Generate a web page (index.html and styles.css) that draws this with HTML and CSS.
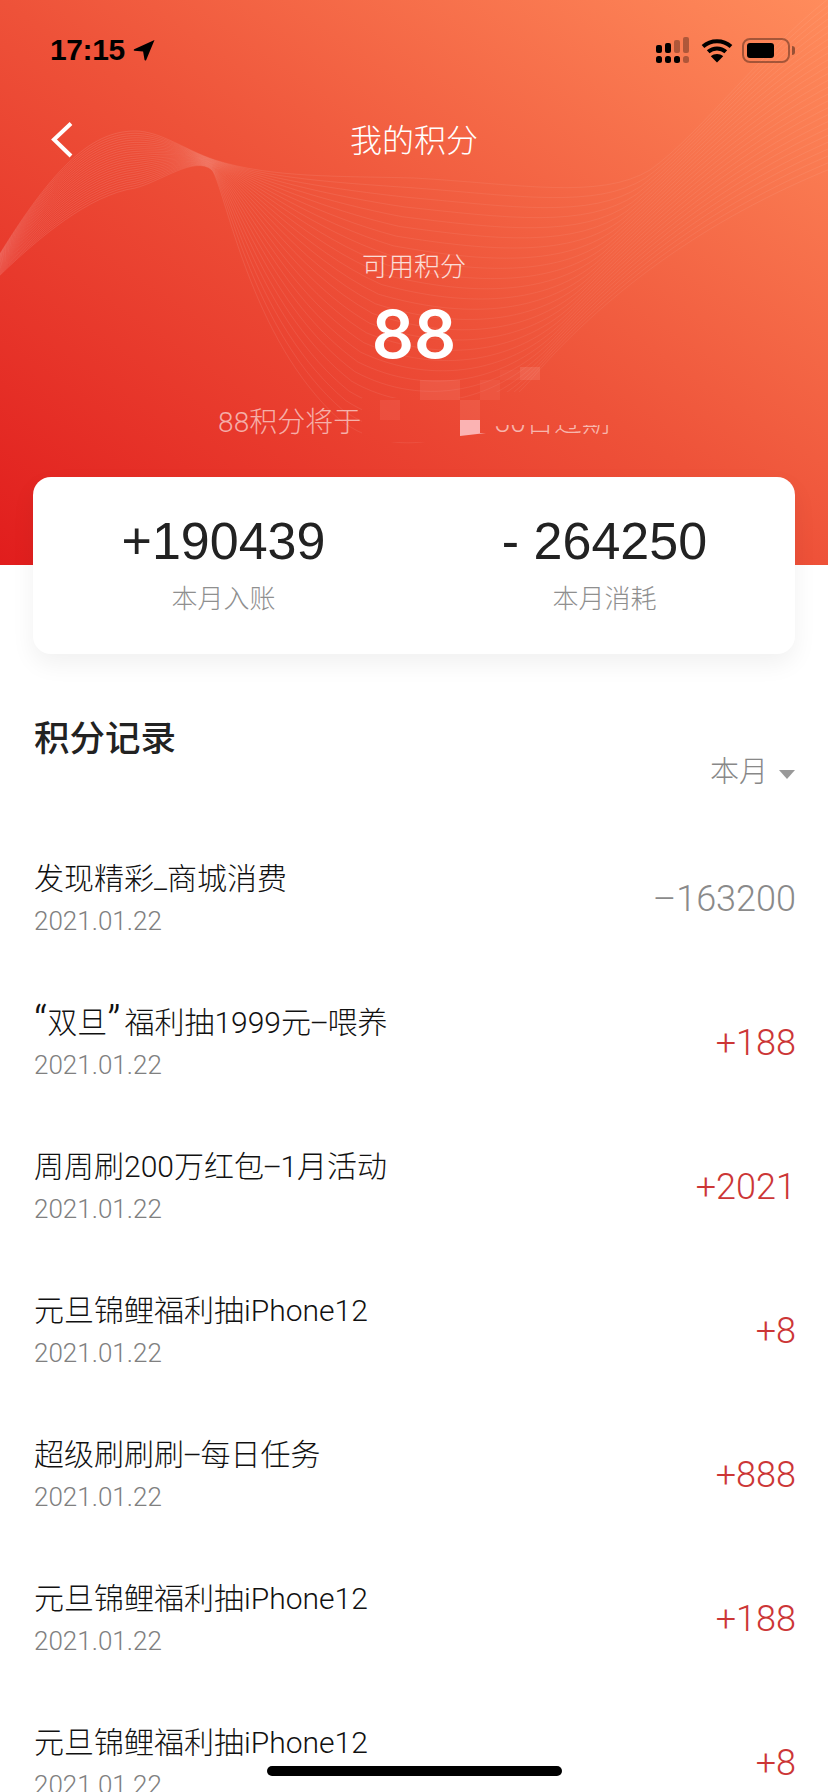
FILE: index.html
```html
<!DOCTYPE html>
<html lang="zh-CN">
<head>
  <meta charset="UTF-8" />
  <title>我的积分</title>
  <meta name="viewport" content="width=device-width, initial-scale=1">
  <link rel="stylesheet" href="styles.css">
</head>
<body>
  <div class="page">
    <header class="hero">
      <svg class="wave" id="wave" width="828" height="565" viewBox="0 0 828 565">
        <defs>
          <linearGradient id="waveFade" gradientUnits="userSpaceOnUse" x1="0" y1="0" x2="828" y2="0">
            <stop offset="0" stop-color="#fff" stop-opacity=".12"/>
            <stop offset=".25" stop-color="#fff" stop-opacity=".09"/>
            <stop offset=".6" stop-color="#fff" stop-opacity=".06"/>
            <stop offset="1" stop-color="#fff" stop-opacity=".07"/>
          </linearGradient>
        </defs>
      </svg>

      <div class="status">
        <div class="status-time">
          <span>17:15</span>
          <svg width="22" height="22" viewBox="0 0 22 22"><path d="M21.500 1 1.200 10.200c-.8.4-.6 1.500.3 1.600l8.600.6 1.400 8.400c.2.9 1.300 1 1.700.2z" fill="#000"/></svg>
        </div>
        <div class="status-icons">
          <svg width="34" height="26" viewBox="0 0 34 26">
            <rect x="0" y="8" width="6" height="8" rx="2" fill="#000"/>
            <rect x="9" y="6" width="6" height="10" rx="2" fill="#000"/>
            <rect x="18" y="3" width="6" height="13" rx="2" fill="#000" opacity=".3"/>
            <rect x="27" y="0" width="6" height="16" rx="2" fill="#000" opacity=".3"/>
            <rect x="0" y="19" width="6" height="7" rx="2.500" fill="#000"/>
            <rect x="9" y="19" width="6" height="7" rx="2.500" fill="#000"/>
            <rect x="18" y="19" width="6" height="7" rx="2.500" fill="#000"/>
            <rect x="27" y="19" width="6" height="7" rx="2.500" fill="#000" opacity=".3"/>
          </svg>
          <svg class="wifi" width="32" height="25" viewBox="0 0 32 25">
            <path d="M2 8.500C9.800 1.500 22.200 1.500 30 8.500M7.200 13.800C12.200 9.300 19.800 9.300 24.800 13.800" fill="none" stroke="#000" stroke-width="4"/>
            <path d="M16 24.500 9.800 18.300C13.300 15.200 18.700 15.200 22.200 18.300z" fill="#000"/>
          </svg>
          <div class="battery"><div class="battery-level"></div></div>
          <div class="battery-nub"></div>
        </div>
      </div>

      <nav class="nav">
        <svg class="back" width="24" height="38" viewBox="0 0 24 38"><path d="M21 2.500 4 18.500l17 16.500" fill="none" stroke="#fff" stroke-width="4"/></svg>
        <h1>我的积分</h1>
      </nav>

      <div class="balance">
        <div class="balance-label">可用积分</div>
        <div class="balance-num">88</div>
        <div class="balance-note">88积分将于2021年1月30日过期</div>
      </div>

      <svg class="mosaic" width="828" height="565" viewBox="0 0 828 565">
        <defs>
          <!-- same axis and stops as the hero background, so the cover blends in -->
          <linearGradient id="cover" gradientUnits="userSpaceOnUse" x1="151" y1="668" x2="677" y2="-103">
            <stop offset="0" stop-color="#e11d1d"/>
            <stop offset=".5" stop-color="#ee5239"/>
            <stop offset="1" stop-color="#ff8c5c"/>
          </linearGradient>
        </defs>
        <rect x="362" y="398" width="128" height="44" fill="url(#cover)"/>
        <rect x="480" y="392" width="140" height="33" fill="url(#cover)"/>
        <rect x="380" y="400" width="20" height="20" fill="#fff" opacity=".06"/>
        <rect x="420" y="380" width="40" height="20" fill="#fff" opacity=".08"/>
        <rect x="480" y="380" width="20" height="20" fill="#fff" opacity=".05"/>
        <rect x="500" y="370" width="20" height="10" fill="#fff" opacity=".04"/>
        <rect x="520" y="367" width="20" height="13" fill="#fff" opacity=".1"/>
        <rect x="460" y="400" width="20" height="20" fill="#fff" opacity=".08"/>
        <path d="M460 420h20v13h6l-26 3z" fill="#fbb3b3"/>
      </svg>
    </header>

    <section class="summary">
      <div class="summary-col">
        <div class="summary-num">+190439</div>
        <div class="summary-label">本月入账</div>
      </div>
      <div class="summary-col">
        <div class="summary-num">- 264250</div>
        <div class="summary-label">本月消耗</div>
      </div>
    </section>

    <section class="records">
      <div class="records-head">
        <h2>积分记录</h2>
        <div class="month">本月<span class="caret"></span></div>
      </div>

      <div class="row">
        <div><div class="row-title">发现精彩_商城消费</div><div class="row-date">2021.01.22</div></div>
        <div class="amount minus">–163200</div>
      </div>
      <div class="row">
        <div><div class="row-title"><span class="quote">“</span>双旦<span class="quote quote-close">”</span>福利抽1999元<span class="dash">–</span>喂养</div><div class="row-date">2021.01.22</div></div>
        <div class="amount">+188</div>
      </div>
      <div class="row">
        <div><div class="row-title">周周刷200万红包<span class="dash">–</span>1月活动</div><div class="row-date">2021.01.22</div></div>
        <div class="amount">+2021</div>
      </div>
      <div class="row">
        <div><div class="row-title">元旦锦鲤福利抽iPhone12</div><div class="row-date">2021.01.22</div></div>
        <div class="amount">+8</div>
      </div>
      <div class="row">
        <div><div class="row-title">超级刷刷刷<span class="dash">–</span>每日任务</div><div class="row-date">2021.01.22</div></div>
        <div class="amount">+888</div>
      </div>
      <div class="row">
        <div><div class="row-title">元旦锦鲤福利抽iPhone12</div><div class="row-date">2021.01.22</div></div>
        <div class="amount">+188</div>
      </div>
      <div class="row">
        <div><div class="row-title">元旦锦鲤福利抽iPhone12</div><div class="row-date">2021.01.22</div></div>
        <div class="amount">+8</div>
      </div>
    </section>

    <div class="home-bar"></div>
  </div>

  <script src="wave.js"></script>
</body>
</html>
```

FILE: styles.css
```css
* {
  box-sizing: border-box;
}
body {
  margin: 0;
  background: #fff;
  font-family: "Liberation Sans", "Noto Sans CJK SC", sans-serif;
}
.page {
  position: relative;
  width: 828px;
  height: 1792px;
  overflow: hidden;
}

/* red header */
.hero {
  position: relative;
  height: 565px;
  padding: 0 34px;
  background: linear-gradient(to top right, #e11d1d 0%, #ee5239 50%, #ff8c5c 100%);
  color: #fff;
}
.wave, .mosaic {
  position: absolute;
  left: 0;
  top: 0;
}
.status {
  position: relative;
  display: flex;
  justify-content: space-between;
  align-items: center;
  height: 100px;
  padding: 0 0 0 16px;
}
.status-time {
  display: flex;
  align-items: center;
  gap: 8px;
  color: #000;
  font-size: 30px;
  font-weight: bold;
  letter-spacing: -0.4px;
}
.status-icons {
  display: flex;
  align-items: center;
  margin-right: -1px;
}
.wifi {
  margin-left: 11px;
  margin-right: 9px;
}
.battery {
  width: 48px;
  height: 25px;
  padding: 3px;
  border: 2px solid rgba(0,0,0,0.35);
  border-radius: 8px;
}
.battery-level {
  width: 27px;
  height: 15px;
  background: #000;
  border-radius: 3px;
}
.battery-nub {
  width: 3px;
  height: 9px;
  margin-left: 2px;
  background: rgba(0,0,0,0.4);
  border-radius: 0 3px 3px 0;
}
.nav {
  position: relative;
  height: 80px;
  padding-bottom: 4px;
  display: flex;
  align-items: center;
  justify-content: center;
}
.back {
  position: absolute;
  left: 16px;
  top: 21px;
}
.nav h1 {
  margin: 0;
  font-size: 32px;
  font-weight: 300;
}
.balance {
  position: relative;
  text-align: center;
  padding-top: 67px;
}
.balance-label {
  font-size: 26px;
  font-weight: 300;
  line-height: 40px;
  opacity: 0.8;
}
.balance-num {
  margin-top: 5px;
  font-family: Inter, "Liberation Sans", sans-serif;
  font-size: 66px;
  font-weight: 600;
  line-height: 84px;
}
.balance-note {
  margin-top: 29px;
  font-family: Roboto, "Noto Sans CJK SC", sans-serif;
  font-size: 28px;
  font-weight: 300;
  line-height: 36px;
  color: rgba(255,255,255,0.6);
}

/* white card that overlaps the header */
.summary {
  position: relative;
  display: flex;
  margin: -88px 33px 0;
  height: 177px;
  padding-top: 34px;
  background: #fff;
  border-radius: 18px;
  box-shadow: 0 10px 24px rgba(0,0,0,0.06);
}
.summary-col {
  flex: 1;
  text-align: center;
}
.summary-num {
  font-size: 52px;
  line-height: 60px;
  color: #222;
}
.summary-label {
  margin-top: 10px;
  font-size: 26px;
  font-weight: 300;
  line-height: 36px;
  color: #8f8f8f;
}

/* list */
.records {
  padding: 62px 33px 0 34px;
}
.records-head {
  position: relative;
  height: 106px;
}
.records-head h2 {
  margin: 0;
  font-size: 35.5px;
  font-weight: 500;
  line-height: 46px;
  color: #222;
}
.month {
  position: absolute;
  right: 0;
  top: 37px;
  display: flex;
  align-items: center;
  gap: 11px;
  font-size: 29px;
  font-weight: 300;
  line-height: 38px;
  color: #888;
}
.caret {
  margin-top: 5px;
  border-top: 9px solid #999;
  border-left: 8px solid transparent;
  border-right: 8px solid transparent;
}
.row {
  display: flex;
  justify-content: space-between;
  align-items: center;
  height: 144px;
  padding-top: 1px;
}
.row-title {
  height: 40px;
  font-family: Roboto, "Noto Sans CJK SC", sans-serif;
  font-size: 30px;
  font-weight: 300;
  line-height: 40px;
  color: #111;
}
.quote {
  font-size: 44px;
  line-height: 0;
  vertical-align: -4px;
}
.quote-close {
  padding-right: 4px;
}
.dash {
  margin: 0 -1.5px;
}
.row-date {
  margin-top: 12px;
  font-family: Roboto, "Liberation Sans", sans-serif;
  font-size: 26px;
  font-weight: 300;
  line-height: 20px;
  color: #808080;
}
.amount {
  margin: 9px -1px 0 0;
  font-family: Roboto, "Liberation Sans", sans-serif;
  font-size: 36px;
  font-weight: 300;
  color: #cc3636;
}
.amount.minus {
  color: #8a8a8a;
}
.home-bar {
  position: absolute;
  left: 267px;
  bottom: 16px;
  width: 295px;
  height: 10px;
  background: #000;
  border-radius: 5px;
}
```

FILE: wave.js
```js
// draws the fan of thin lines in the header: each line is a mix of the two edge curves
const topEdge = [-10,270, 50,170, 90,131, 135,131, 160,131, 185,150, 215,160, 270,178, 340,176, 414,178, 520,184, 600,200, 650,170, 700,135, 770,40, 840,-10];
const lowEdge = [-10,285, 40,235, 90,195, 135,188, 160,182, 195,155, 212,170, 226,190, 250,340, 340,420, 400,465, 480,440, 535,375, 600,300, 700,220, 840,165];
const lineCount = 26;

function pathFor(t) {
  const p = topEdge.map((v, i) => (v + (lowEdge[i] - v) * t).toFixed(1));
  return `M${p[0]} ${p[1]}C` + p.slice(2).join(" ");
}

const svg = document.getElementById("wave");
for (let i = 0; i < lineCount; i++) {
  const line = document.createElementNS("http://www.w3.org/2000/svg", "path");
  line.setAttribute("d", pathFor(i / (lineCount - 1)));
  line.setAttribute("fill", "none");
  line.setAttribute("stroke", "url(#waveFade)");
  line.setAttribute("stroke-width", "1");
  svg.appendChild(line);
}
```
